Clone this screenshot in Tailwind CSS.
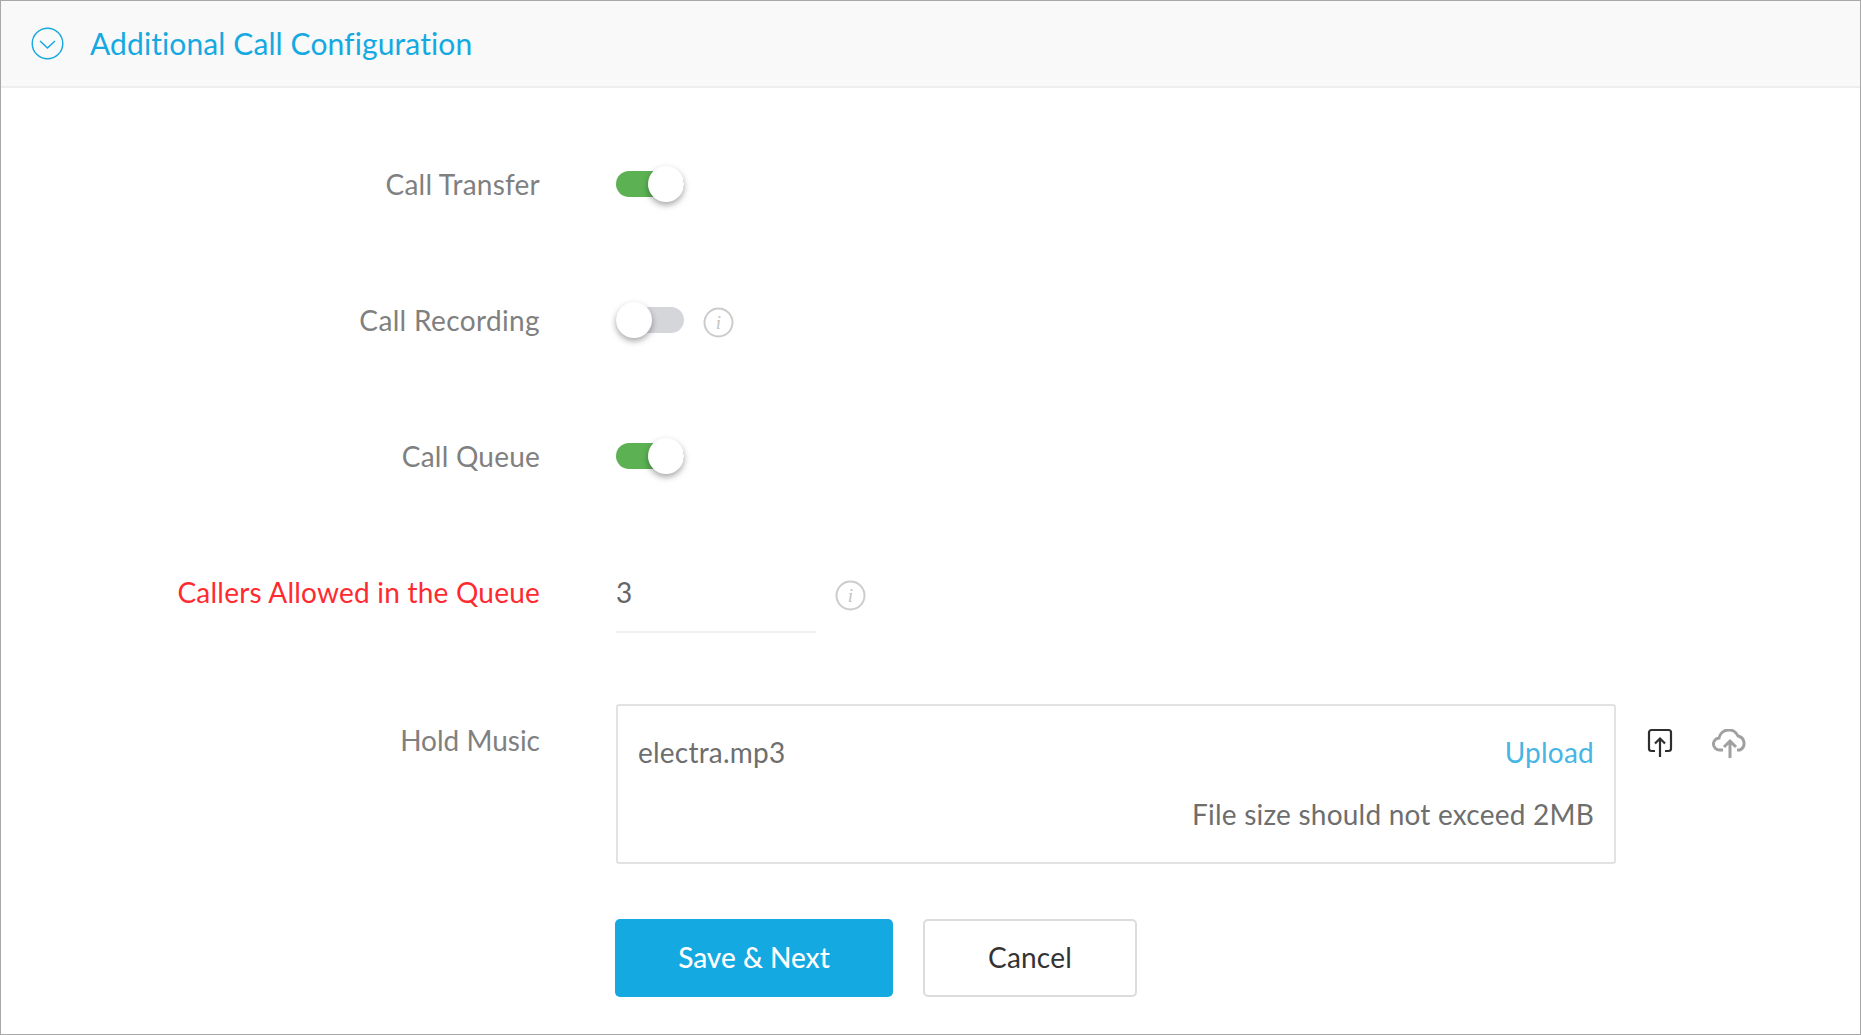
<!DOCTYPE html>
<html>
<head>
<meta charset="utf-8">
<title>Additional Call Configuration</title>
<script src="https://cdn.jsdelivr.net/npm/@tailwindcss/browser@4"></script>
</head>
<body class="bg-white font-['Lato',sans-serif]">
<div class="w-[1861px] h-[1035px] border border-[#a8a8a8] overflow-hidden flex flex-col">
  <header class="h-[87px] shrink-0 bg-[#f9f9f9] border-b-2 border-[#eeeeee] flex items-center pl-[31px] gap-[25px]">
    <svg class="w-[33px] h-[33px] -mt-[1px] -ml-[1px]" viewBox="0 0 33 33" fill="none" stroke="#15a9e1" stroke-width="1.4">
      <circle cx="16.5" cy="16.5" r="15.3"/>
      <path d="M9 14l7.5 7 7.500-7" stroke-width="1.5"/>
    </svg>
    <h1 class="ml-[1px] text-[30px] text-[#15a9e1] font-normal tracking-[0.1px]">Additional Call Configuration</h1>
  </header>

  <main class="flex flex-col pt-[78px] text-[28px] tracking-[0.22px]">
    <div class="flex items-center h-[36px]">
      <label class="w-[539px] text-right text-[#808080]">Call Transfer</label>
      <div class="ml-[76px] relative w-[68px] h-[26px] rounded-full bg-[#5cb253]">
        <span class="absolute right-0 -top-[5px] w-[36px] h-[36px] rounded-full bg-white shadow-[0_3px_6px_rgba(0,0,0,0.35)]"></span>
      </div>
    </div>

    <div class="flex items-center h-[36px] mt-[100px]">
      <label class="w-[539px] text-right text-[#808080] tracking-[0.36px]">Call Recording</label>
      <div class="ml-[76px] relative w-[68px] h-[26px] rounded-full bg-[#d5d6da]">
        <span class="absolute left-0 -top-[5px] w-[36px] h-[36px] rounded-full bg-white shadow-[0_3px_6px_rgba(0,0,0,0.35)]"></span>
      </div>
      <svg class="ml-[19px] mt-[5px] w-[31px] h-[31px]" viewBox="0 0 31 31" fill="none">
        <circle cx="15.5" cy="15.5" r="14" stroke="#cccccc" stroke-width="2"/>
        <text x="15.5" y="22" text-anchor="middle" font-family="Liberation Serif" font-style="italic" font-size="19" fill="#c4c4c4">i</text>
      </svg>
    </div>

    <div class="flex items-center h-[36px] mt-[100px]">
      <label class="w-[539px] text-right text-[#808080]">Call Queue</label>
      <div class="ml-[76px] relative w-[68px] h-[26px] rounded-full bg-[#5cb253]">
        <span class="absolute right-0 -top-[5px] w-[36px] h-[36px] rounded-full bg-white shadow-[0_3px_6px_rgba(0,0,0,0.35)]"></span>
      </div>
    </div>

    <div class="flex items-start mt-[80px]">
      <label class="w-[539px] text-right text-[#ff2a2f] leading-[77px]">Callers Allowed in the Queue</label>
      <div class="ml-[76px] w-[200px] h-[79px] border-b-2 border-[#edf0f3] text-[#666666] leading-[77px]">3</div>
      <svg class="ml-[19px] mt-[26px] w-[31px] h-[31px]" viewBox="0 0 31 31" fill="none">
        <circle cx="15.5" cy="15.5" r="14" stroke="#cccccc" stroke-width="2"/>
        <text x="15.5" y="22" text-anchor="middle" font-family="Liberation Serif" font-style="italic" font-size="19" fill="#c4c4c4">i</text>
      </svg>
    </div>

    <div class="flex items-start mt-[71px]">
      <label class="w-[539px] text-right text-[#808080] pt-[15px] tracking-[0px]">Hold Music</label>
      <div class="ml-[76px] w-[1000px] h-[160px] border-2 border-[#e2e2e2] rounded-[3px] px-[20px] text-[#6e6e6e]">
        <div class="flex justify-between items-center mt-[28px] h-[36px]">
          <span>electra.mp3</span>
          <a class="text-[#45b6e5]">Upload</a>
        </div>
        <p class="text-right mt-[26px] leading-[36px]">File size should not exceed 2MB</p>
      </div>
      <svg class="ml-[31px] mt-[24px] w-[26px] h-[30px]" viewBox="0 0 26 30" fill="none" stroke="#2e2e2e" stroke-width="2.2">
        <path d="M8 23H4.500a2.500 2.500 0 0 1-2.500-2.500V4.500A2.500 2.500 0 0 1 4.500 2h17A2.500 2.500 0 0 1 24 4.500v16a2.500 2.500 0 0 1-2.500 2.500H18"/>
        <path d="M13 29V11M8 15.500l5-5 5 5"/>
      </svg>
      <svg class="ml-[39px] mt-[25px] w-[36px] h-[30px]" viewBox="0 0 36 30" fill="none" stroke="#a0a0a0" stroke-width="3">
        <path d="M11 21H8a6 6 0 0 1-1-12 10 10 0 0 1 19-2 7.500 7.500 0 0 1 2 14h-3"/>
        <path d="M18 29V13M12 18l6-6 6 6"/>
      </svg>
    </div>

    <div class="flex mt-[55px] ml-[614px] gap-[30px]">
      <button class="w-[278px] h-[78px] pb-[2px] bg-[#15a9e1] rounded-[5px] text-white font-medium tracking-[0px]">Save &amp; Next</button>
      <button class="w-[214px] h-[78px] pb-[2px] border-2 border-[#dcdcdc] rounded-[5px] text-[#333333]">Cancel</button>
    </div>
  </main>
</div>
</body>
</html>
